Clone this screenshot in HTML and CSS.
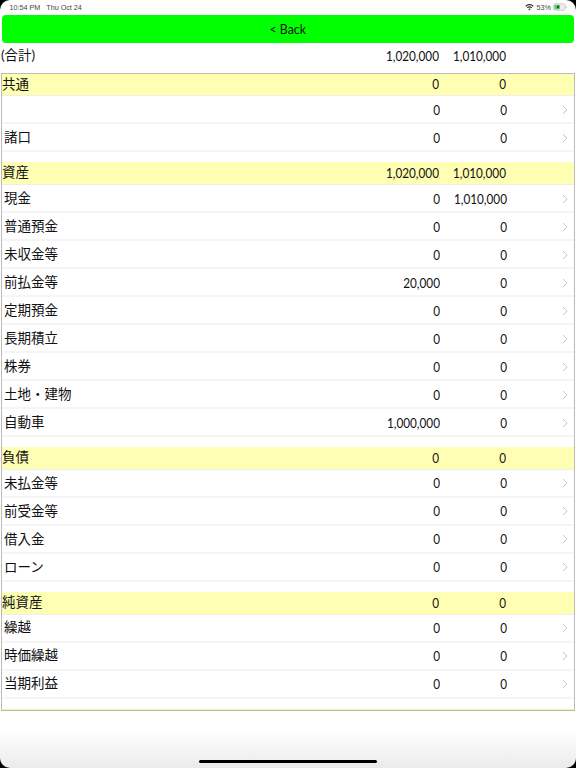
FILE: index.html
```html
<!DOCTYPE html>
<html lang="ja">
<head>
<meta charset="utf-8">
<title>Balance</title>
<link rel="stylesheet" href="styles.css">
</head>
<body>
<div class="screen">
  <header class="status">
    <span class="clock">10:54 PM</span><span class="date">Thu Oct 24</span>
    <span class="spacer"></span>
    <svg class="wifi" viewBox="0 0 12 9" width="9" height="7"><path d="M6 8.6 4.3 6.6a2.6 2.6 0 0 1 3.4 0zM3.4 5.6 2.4 4.4a5.6 5.6 0 0 1 7.2 0l-1 1.2a4 4 0 0 0-5.2 0zM1.5 3.4.4 2.2a8.6 8.6 0 0 1 11.2 0l-1.1 1.2a7 7 0 0 0-9 0z" fill="#333"/></svg>
    <span class="pct">53%</span>
    <svg class="battery" viewBox="0 0 16 8" width="15" height="8"><rect x=".5" y=".5" width="12.5" height="7" rx="2" fill="#eee" stroke="#bbb" stroke-width=".7"/><rect x="1.5" y="1.5" width="6" height="5" rx="1" fill="#4cd964"/><path d="M5.8 1.6 3.8 4.4h1.4L4.6 6.4l2.2-3H5.4z" fill="#111"/><path d="M14 3v2c.7-.2 1-.6 1-1s-.3-.8-1-1z" fill="#bbb"/></svg>
  </header>

  <button class="back"><span class="back-label">&lt; Back</span></button>

  <div class="total">
    <span class="name">(合計)</span><span class="num">1,020,000</span><span class="num">1,010,000</span>
  </div>

  <main class="table">
    <section class="group">
      <div class="head"><span class="name">共通</span><span class="num">0</span><span class="num">0</span></div>
      <div class="row"><span class="name"></span><span class="num">0</span><span class="num">0</span><svg class="chev" viewBox="0 0 6 10"><path d="M1 1l4 4-4 4"/></svg></div>
      <div class="row"><span class="name">諸口</span><span class="num">0</span><span class="num">0</span><svg class="chev" viewBox="0 0 6 10"><path d="M1 1l4 4-4 4"/></svg></div>
    </section>
    <section class="group">
      <div class="head"><span class="name">資産</span><span class="num">1,020,000</span><span class="num">1,010,000</span></div>
      <div class="row"><span class="name">現金</span><span class="num">0</span><span class="num">1,010,000</span><svg class="chev" viewBox="0 0 6 10"><path d="M1 1l4 4-4 4"/></svg></div>
      <div class="row"><span class="name">普通預金</span><span class="num">0</span><span class="num">0</span><svg class="chev" viewBox="0 0 6 10"><path d="M1 1l4 4-4 4"/></svg></div>
      <div class="row"><span class="name">未収金等</span><span class="num">0</span><span class="num">0</span><svg class="chev" viewBox="0 0 6 10"><path d="M1 1l4 4-4 4"/></svg></div>
      <div class="row"><span class="name">前払金等</span><span class="num">20,000</span><span class="num">0</span><svg class="chev" viewBox="0 0 6 10"><path d="M1 1l4 4-4 4"/></svg></div>
      <div class="row"><span class="name">定期預金</span><span class="num">0</span><span class="num">0</span><svg class="chev" viewBox="0 0 6 10"><path d="M1 1l4 4-4 4"/></svg></div>
      <div class="row"><span class="name">長期積立</span><span class="num">0</span><span class="num">0</span><svg class="chev" viewBox="0 0 6 10"><path d="M1 1l4 4-4 4"/></svg></div>
      <div class="row"><span class="name">株券</span><span class="num">0</span><span class="num">0</span><svg class="chev" viewBox="0 0 6 10"><path d="M1 1l4 4-4 4"/></svg></div>
      <div class="row"><span class="name">土地・建物</span><span class="num">0</span><span class="num">0</span><svg class="chev" viewBox="0 0 6 10"><path d="M1 1l4 4-4 4"/></svg></div>
      <div class="row"><span class="name">自動車</span><span class="num">1,000,000</span><span class="num">0</span><svg class="chev" viewBox="0 0 6 10"><path d="M1 1l4 4-4 4"/></svg></div>
    </section>
    <section class="group">
      <div class="head"><span class="name">負債</span><span class="num">0</span><span class="num">0</span></div>
      <div class="row"><span class="name">未払金等</span><span class="num">0</span><span class="num">0</span><svg class="chev" viewBox="0 0 6 10"><path d="M1 1l4 4-4 4"/></svg></div>
      <div class="row"><span class="name">前受金等</span><span class="num">0</span><span class="num">0</span><svg class="chev" viewBox="0 0 6 10"><path d="M1 1l4 4-4 4"/></svg></div>
      <div class="row"><span class="name">借入金</span><span class="num">0</span><span class="num">0</span><svg class="chev" viewBox="0 0 6 10"><path d="M1 1l4 4-4 4"/></svg></div>
      <div class="row"><span class="name">ローン</span><span class="num">0</span><span class="num">0</span><svg class="chev" viewBox="0 0 6 10"><path d="M1 1l4 4-4 4"/></svg></div>
    </section>
    <section class="group">
      <div class="head"><span class="name">純資産</span><span class="num">0</span><span class="num">0</span></div>
      <div class="row"><span class="name">繰越</span><span class="num">0</span><span class="num">0</span><svg class="chev" viewBox="0 0 6 10"><path d="M1 1l4 4-4 4"/></svg></div>
      <div class="row"><span class="name">時価繰越</span><span class="num">0</span><span class="num">0</span><svg class="chev" viewBox="0 0 6 10"><path d="M1 1l4 4-4 4"/></svg></div>
      <div class="row"><span class="name">当期利益</span><span class="num">0</span><span class="num">0</span><svg class="chev" viewBox="0 0 6 10"><path d="M1 1l4 4-4 4"/></svg></div>
    </section>
  </main>
  <div class="home"></div>
</div>
</body>
</html>
```
FILE: styles.css
```css
html, body { margin: 0; padding: 0; background: #000; }
body { width: 576px; height: 768px; overflow: hidden; font-family: Lato, "Noto Sans CJK JP", sans-serif; color: #111; }
.screen { position: relative; width: 576px; height: 768px; box-sizing: border-box; padding: 0 2px; border-radius: 10px;
  background: linear-gradient(#fff 0, #fff 730px, #ebebeb 768px); overflow: hidden; }
.status { display: flex; align-items: center; height: 15px; padding: 0 6px 1px 7.5px; box-sizing: border-box; font: 7.2px "Liberation Sans", sans-serif; color: #444; }
.date { margin-left: 6px; }
.spacer { flex: 1; }
.wifi { margin-right: 1px; }
.pct { margin: 0 2px; }
.back { display: block; width: 100%; height: 28px; border: 0; border-radius: 4px; background: #00ff00; font: 14px/1 Lato, sans-serif; color: #111; padding: 0; }
.back-label { display: inline-block; transform: scaleX(.88); }
.name { flex: 1; font-size: 13.5px; line-height: 1; }
.total { display: flex; align-items: center; height: 27px; margin-left: -1px; padding: 0 67.7px 2px 0; box-sizing: border-box; }
.num { width: 67px; text-align: right; font-size: 14px; line-height: 1; white-space: nowrap; transform: scaleX(.84); transform-origin: right center; }
.table { margin: 2.5px -1px 0; border: 1px solid #bbb; height: 638px; box-sizing: border-box; box-shadow: inset 0 -1px 0 #fbf3a0; }
.group { padding-bottom: 10px; }
.head { display: flex; align-items: center; height: 22.75px; box-sizing: border-box; padding: 0 67.7px 0 0; background: #ffffb3; border-bottom: 1px solid #eee; }
.row { display: flex; align-items: center; height: 28px; box-sizing: border-box; padding: 1px 7px 0 2px; border-bottom: 2px solid #f5f5f5; }
.chev { width: 6px; height: 10px; margin-left: 54.7px; margin-right: -.7px; fill: none; stroke: #c8c8c8; stroke-width: 1; }
.home { position: absolute; left: 199px; bottom: 5px; width: 178px; height: 3px; border-radius: 2px; background: #000; }
```
